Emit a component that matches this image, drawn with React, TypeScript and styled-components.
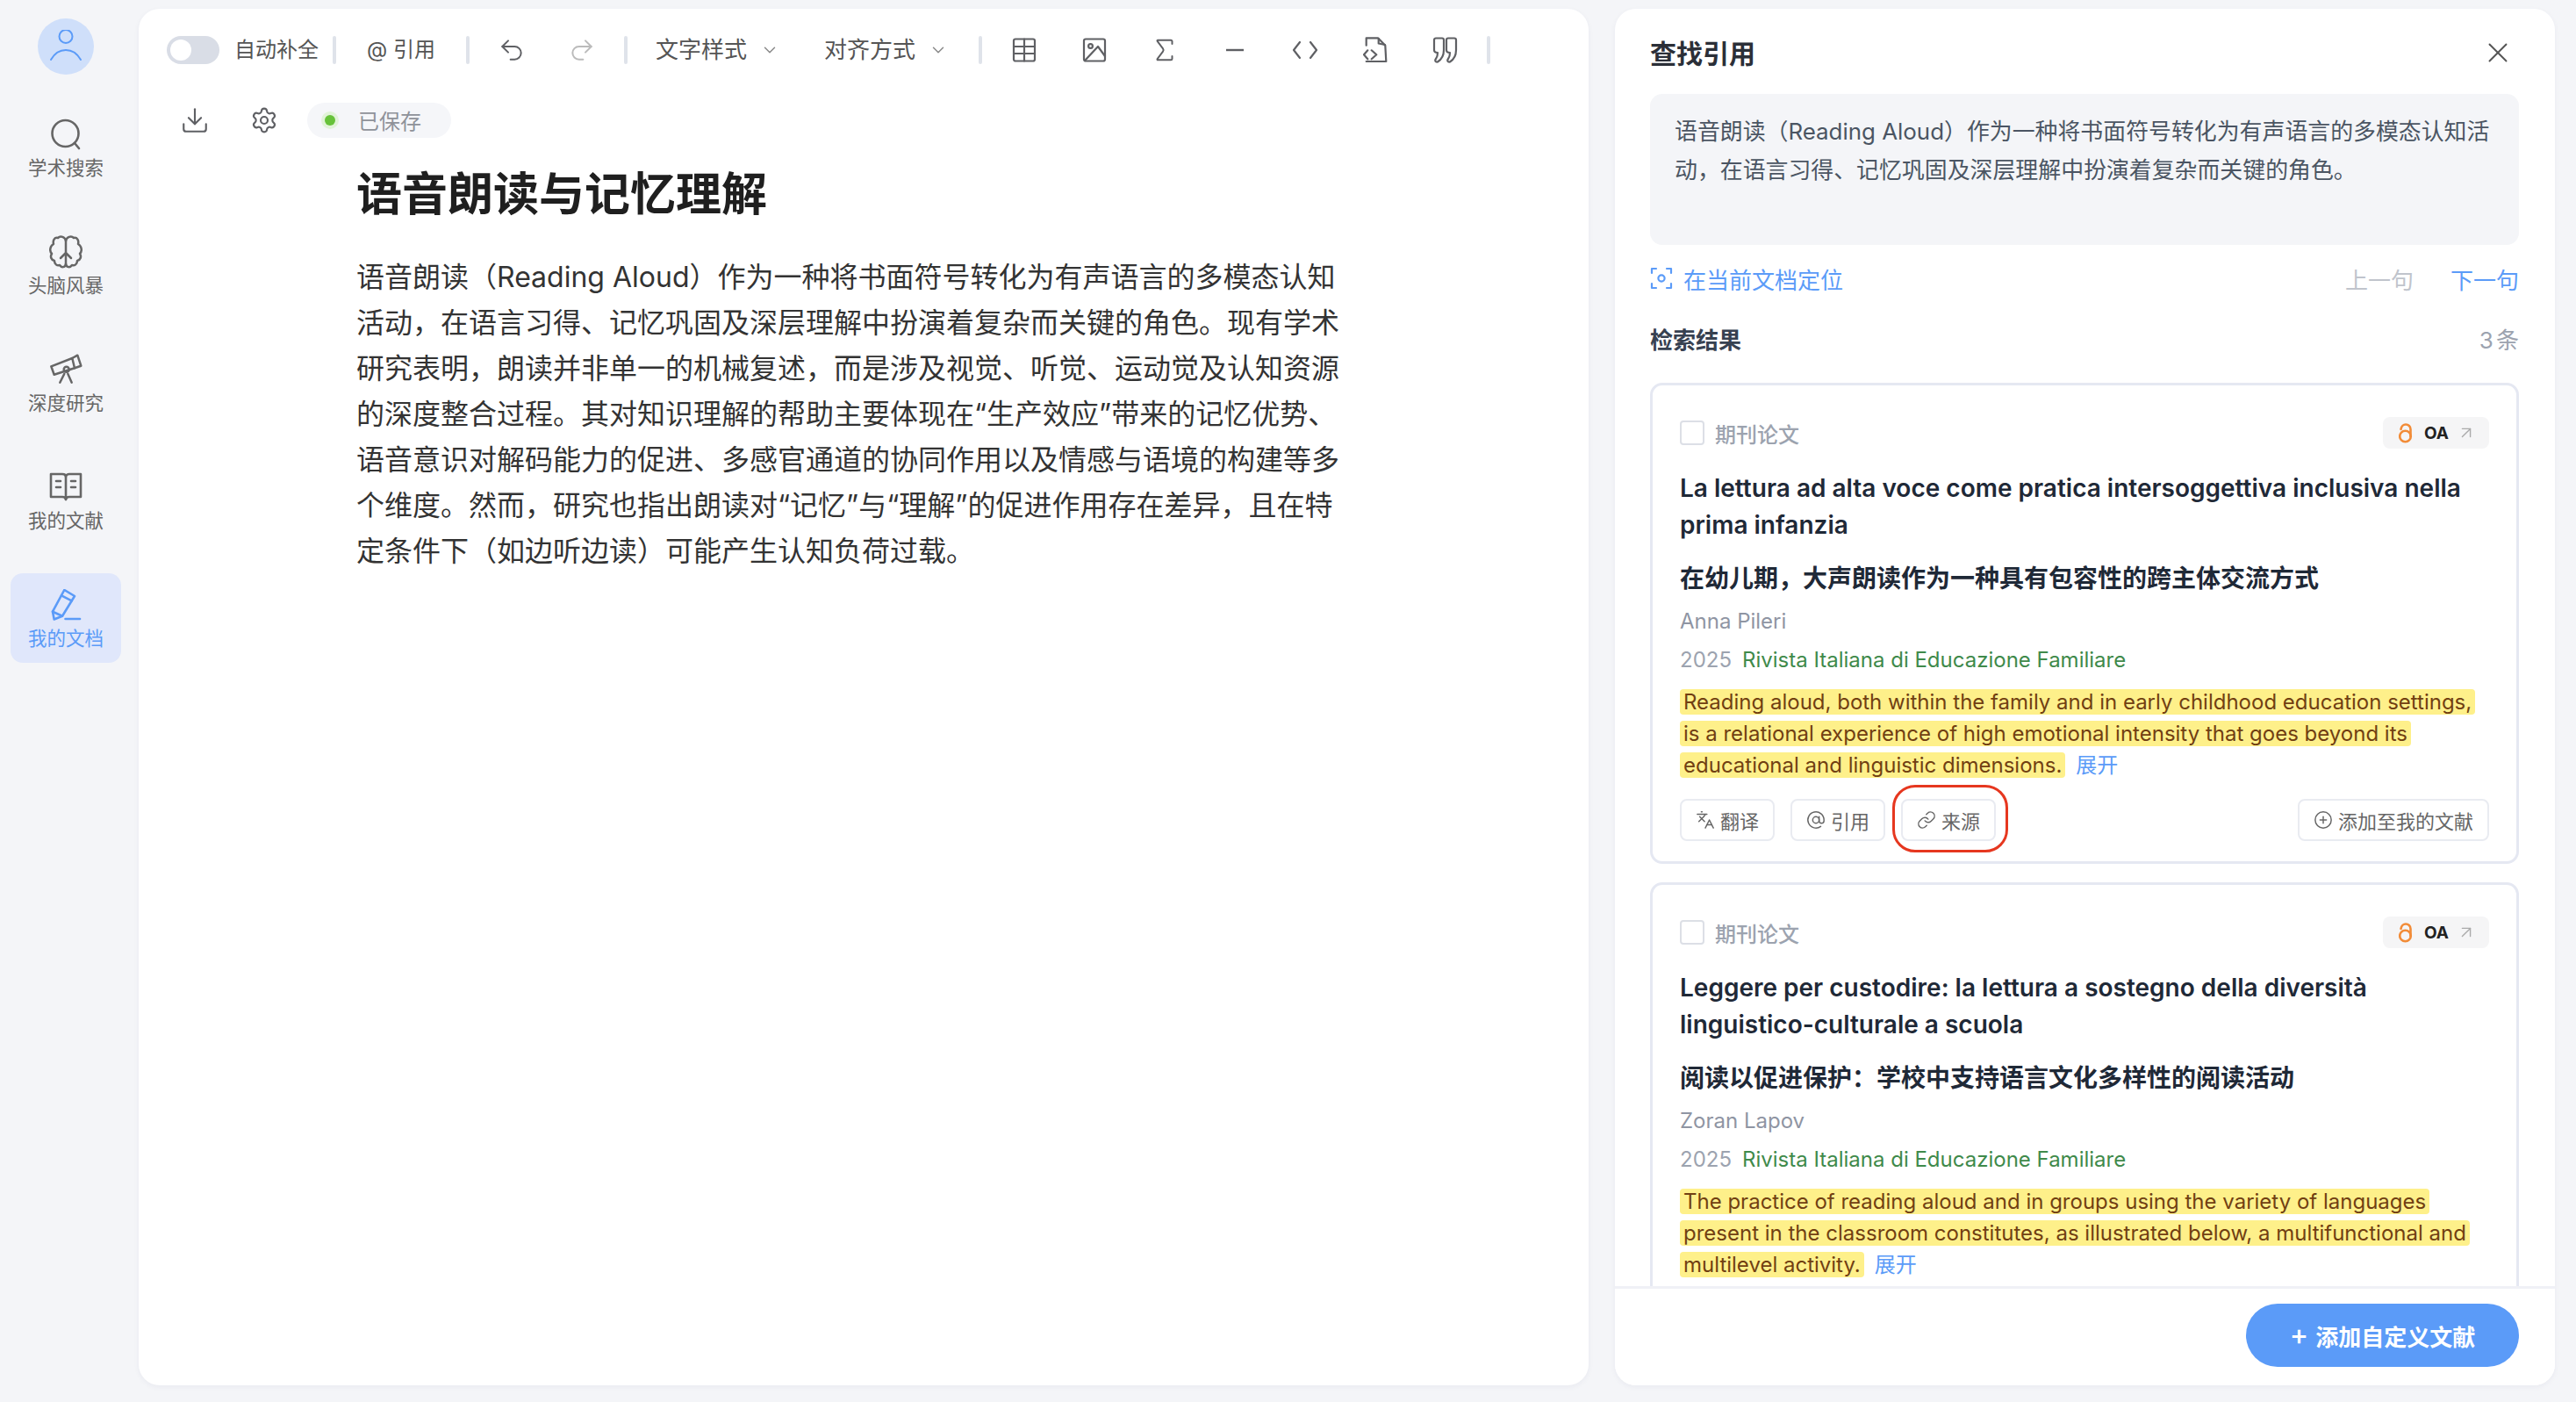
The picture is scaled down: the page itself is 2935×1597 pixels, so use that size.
import React from "react";
import styled, { createGlobalStyle } from "styled-components";
import { ChevronDown, Undo2, Redo2, Sigma, Download, Settings, Languages, Link, CirclePlus, AtSign, ArrowUpRight, X } from "lucide-react";

const Global = createGlobalStyle`
  html, body { margin: 0; padding: 0; height: 100%; }
  #root { height: 100vh; }
  * { box-sizing: border-box; }
  body { font-family: Inter, "Noto Sans CJK SC", sans-serif; background: #f4f5f8; color: #333; }
`;

const Page = styled.div`
  display: flex;
  height: 1597px;
  padding: 10px 24px 19px 0;
  background: #f4f5f8;
`;

/* Sidebar */
const Sidebar = styled.nav`
  width: 158px;
  margin-top: -10px;
  flex: none;
  display: flex;
  flex-direction: column;
  align-items: center;
  padding-top: 21px;
  gap: 32px;
`;
const Avatar = styled.div`
  width: 64px;
  height: 64px;
  margin-right: 8px;
  border-radius: 50%;
  background: #cfdffa;
  display: flex;
  align-items: center;
  justify-content: center;
  color: #5b9bf8;
`;
const NavItem = styled.div<{ $active?: boolean }>`
  width: 126px;
  height: 102px;
  margin-right: 8px;
  border-radius: 14px;
  padding-top: 18px;
  display: flex;
  flex-direction: column;
  align-items: center;
  background: ${(p) => (p.$active ? "#e0e7fb" : "transparent")};
  color: ${(p) => (p.$active ? "#5b9bf8" : "#666")};
`;
const NavIcon = styled.div`
  height: 36px;
  margin-bottom: 5px;
  display: flex;
  align-items: center;
  justify-content: center;
`;
const NavLabel = styled.div`
  font-size: 21.5px;
  line-height: 30px;
`;

/* Editor panel */
const Editor = styled.main`
  width: 1652px;
  flex: none;
  background: #fff;
  border-radius: 24px;
  box-shadow: 0 2px 6px rgba(30, 40, 90, 0.05);
  padding: 31px 0 0 32px;
`;
const Toolbar = styled.div`
  display: flex;
  align-items: center;
  height: 32px;
  color: #555;
`;
const Toggle = styled.div`
  width: 60px;
  height: 32px;
  border-radius: 16px;
  background: #d9dde6;
  padding: 4px;
  margin-right: 17px;
`;
const Knob = styled.div`
  width: 24px;
  height: 24px;
  border-radius: 50%;
  background: #fff;
`;
const ToolText = styled.span<{ $size?: number }>`
  font-size: ${(p) => p.$size ?? 24}px;
  line-height: 32px;
  color: #555;
  white-space: nowrap;
`;
const Sep = styled.div<{ $left: number }>`
  width: 4px;
  height: 32px;
  margin-left: ${(p) => p.$left}px;
  background: #dfe3ea;
  border-radius: 2px;
  flex: none;
`;
const RefButton = styled.div`
  margin-left: 35px;
  width: 113px;
  font-size: 24px;
  line-height: 32px;
  color: #555;
  white-space: nowrap;
`;
const ToolIcon = styled.div<{ $muted?: boolean; $left?: number }>`
  width: 80px;
  height: 32px;
  flex: none;
  margin-left: ${(p) => p.$left ?? 0}px;
  display: flex;
  align-items: center;
  justify-content: center;
  color: ${(p) => (p.$muted ? "#bbb" : "#5f6064")};
`;
const Dropdown = styled.div<{ $left: number }>`
  margin-left: ${(p) => p.$left}px;
  display: flex;
  align-items: center;
  gap: 15px;
  color: #888;
`;
const SecondBar = styled.div`
  display: flex;
  align-items: center;
  height: 40px;
  margin: 44px 0 0 12px;
  color: #5f6064;
`;
const SmallIcon = styled.div`
  width: 40px;
  height: 40px;
  display: flex;
  align-items: center;
  justify-content: center;
  margin-right: 39px;
  flex: none;
`;
const SavedPill = styled.div`
  height: 40px;
  width: 164px;
  margin-left: -10px;
  border-radius: 20px;
  background: #f5f6f9;
  display: flex;
  align-items: center;
  padding: 0 0 2px 20px;
  gap: 26px;
  font-size: 24px;
  color: #8f9299;
`;
const Dot = styled.span`
  width: 12px;
  height: 12px;
  margin-top: 2px;
  border-radius: 50%;
  background: #67c23a;
  box-shadow: 0 0 0 4px #e1f3d8;
  flex: none;
`;
const Doc = styled.article`
  padding-left: 216px;
  width: 1346px;
`;
const DocTitle = styled.h1`
  margin: 33px 0 0;
  font-size: 52px;
  line-height: 64px;
  font-weight: 700;
  color: #1f1f1f;
`;
const DocBody = styled.p`
  margin: 36px 0 0;
  font-size: 32px;
  line-height: 52px;
  color: #333;
`;

/* Right panel */
const Panel = styled.aside`
  flex: none;
  margin-left: 30px;
  width: 1071px;
  background: #fff;
  border-radius: 24px;
  box-shadow: 0 2px 6px rgba(30, 40, 90, 0.05);
  display: flex;
  flex-direction: column;
  padding-top: 30px;
  overflow: hidden;
`;
const PanelHead = styled.div`
  display: flex;
  align-items: center;
  justify-content: space-between;
  height: 40px;
  padding: 0 46px 0 40px;
  color: #555;
`;
const PanelTitle = styled.h2`
  margin: -3px 0 0;
  font-size: 30px;
  font-weight: 600;
  color: #2b2f38;
`;
const QuoteBox = styled.div`
  margin: 27px 41px 0 40px;
  height: 172px;
  background: #f4f5f8;
  border-radius: 14px;
  padding: 21px 28px;
  font-size: 25.9px;
  line-height: 44px;
  color: #4b5563;
`;
const LocateRow = styled.div`
  margin: 18px 41px 0 40px;
  height: 40px;
  display: flex;
  align-items: center;
  font-size: 26px;
  color: #5b9bf8;
`;
const Locate = styled.div`
  display: flex;
  align-items: center;
  gap: 12px;
  flex: 1;
`;
const PrevNext = styled.span<{ $off?: boolean }>`
  margin-left: 42px;
  color: ${(p) => (p.$off ? "#c0c4cc" : "#5b9bf8")};
`;
const ResultHead = styled.div`
  margin: 28px 41px 0 40px;
  height: 40px;
  display: flex;
  align-items: center;
  justify-content: space-between;
  font-size: 26px;
`;
const ResultTitle = styled.span`
  font-weight: 600;
  color: #374151;
`;
const ResultCount = styled.span`
  color: #9ca3af;
  word-spacing: -4px;
`;
const List = styled.div`
  flex: 1;
  margin-top: 31px;
  padding: 0 41px 0 40px;
  overflow: hidden;
  min-height: 0;
`;
const Card = styled.section`
  border: 3px solid #e5e8f2;
  border-radius: 14px;
  padding: 36px 31px 23px;
  margin-bottom: 21px;
`;
const CardTop = styled.div`
  display: flex;
  align-items: center;
  justify-content: space-between;
  height: 36px;
`;
const TypeLabel = styled.label`
  display: flex;
  align-items: center;
  gap: 12px;
  font-size: 24px;
  font-weight: 500;
  color: #9ca3af;
`;
const Check = styled.span`
  width: 28px;
  height: 28px;
  border: 2.5px solid #dcdfe6;
  border-radius: 4px;
  background: #fff;
`;
const OaTag = styled.div`
  width: 121px;
  height: 36px;
  border-radius: 8px;
  background: #f5f5f6;
  display: flex;
  align-items: center;
  padding-left: 18px;
  font-size: 19px;
  font-weight: 700;
  color: #222;
`;
const OaText = styled.span`
  margin: 0 9px 0 13px;
`;
const Title = styled.h3`
  margin: 24px 0 0;
  font-size: 28px;
  line-height: 42px;
  font-weight: 600;
  color: #1f2937;
`;
const SubTitle = styled.h4`
  margin: 19px 0 0;
  font-size: 28px;
  line-height: 42px;
  font-weight: 600;
  color: #1f2937;
`;
const Author = styled.div`
  margin-top: 10px;
  font-size: 24px;
  line-height: 36px;
  color: #8f95a3;
`;
const Meta = styled.div`
  margin-top: 8px;
  font-size: 24px;
  line-height: 36px;
  color: #9ca3af;
  display: flex;
  gap: 12px;
`;
const Journal = styled.span`
  color: #3f8a4b;
`;
const Abstract = styled.p`
  margin: 12px 0 0;
  font-size: 24px;
  line-height: 36px;
`;
const Mark = styled.span`
  background: #fef08a;
  color: #713f12;
  padding: 0 4px;
  border-radius: 4px;
  box-decoration-break: clone;
  -webkit-box-decoration-break: clone;
`;
const Expand = styled.span`
  margin-left: 12px;
  color: #5b9bf8;
`;
const Actions = styled.div`
  margin-top: 20px;
  display: flex;
  align-items: center;
  gap: 18px;
`;
const ActionBtn = styled.div`
  position: relative;
  height: 48px;
  width: 108px;
  border: 2.5px solid #e9ebf1;
  border-radius: 8px;
  display: flex;
  align-items: center;
  justify-content: center;
  gap: 6px;
  font-size: 22px;
  color: #666;
  background: #fff;
`;
const AddBtn = styled(ActionBtn)`
  width: 218px;
  margin-left: auto;
`;
const Annotation = styled.span`
  position: absolute;
  left: -12px;
  right: -16px;
  top: -18px;
  bottom: -15px;
  border: 3px solid #e6371f;
  border-radius: 26px;
  pointer-events: none;
`;
const Footer = styled.footer`
  flex: none;
  border-top: 3px solid #f0f1f6;
  height: 113px;
  padding: 17px 41px 0 0;
  display: flex;
  justify-content: flex-end;
  background: #fff;
`;
const AddCustom = styled.button`
  width: 311px;
  height: 72px;
  border: none;
  border-radius: 36px;
  background: #5b9bf8;
  color: #fff;
  font-family: inherit;
  font-size: 26px;
  font-weight: 600;
  display: flex;
  align-items: center;
  justify-content: center;
  gap: 8px;
`;
const PlusSign = styled.span`
  font-size: 32px;
  font-weight: 500;
  line-height: 1;
`;

/* Icons */
const s = { fill: "none", stroke: "currentColor", strokeLinecap: "round", strokeLinejoin: "round" } as const;
const UserIcon = () => (
  <svg width="38" height="38" viewBox="0 0 38 38" {...s} strokeWidth="2">
    <circle cx="19" cy="7.5" r="7.5" />
    <path d="M2 34c4-7 10-11 17-11s13 4 17 11" />
  </svg>
);
const SearchIcon = () => (
  <svg width="36" height="36" viewBox="0 0 36 36" {...s} strokeWidth="2.6">
    <circle cx="17.5" cy="17" r="15" />
    <path d="M28 28l5 6" />
  </svg>
);
const BrainIcon = () => (
  <svg width="38" height="38" viewBox="0 0 38 38" {...s} strokeWidth="2.5">
    <path d="M19 6C18 2 13 0 10 3 6 2 4 6 5 10 1 12 0 18 3 21c-2 3-1 7 3 8 0 4 3 6 6 5 2 3 6 3 7-1" />
    <path d="M19 6c1-4 6-6 9-3 4-1 6 3 5 7 4 2 5 8 2 11 2 3 1 7-3 8 0 4-3 6-6 5-2 3-6 3-7-1" />
    <path d="M19 6v27M19 20l-6 6M19 20l6 6" />
  </svg>
);
const TelescopeIcon = () => (
  <svg width="38" height="36" viewBox="-1 -1 38 36" {...s} strokeWidth="2.5">
    <path d="M1.3 13.3L25.3 4l2.7 11.3-23.3 7.4z" />
    <path d="M25.3 4l6-3.3 4 12-7.3 2.6" />
    <circle cx="18.7" cy="16.7" r="3" />
    <path d="M16.3 21.700l-5 10M20.300 21.700l4.400 10" />
  </svg>
);
const BookIcon = () => (
  <svg width="38" height="36" viewBox="0 0 38 36" {...s} strokeWidth="2.6">
    <path d="M2 3h13c2 0 4 1 4 3 0-2 2-3 4-3h13v26H23c-2 0-4 1-4 3 0-2-2-3-4-3H2z" />
    <path d="M19 6v26M8 11h5M8 18h5M25 11h5M25 18h5" />
  </svg>
);
const PenIcon = () => (
  <svg width="36" height="36" viewBox="0 0 36 36" {...s} strokeWidth="2.6">
    <path d="M16.3 1L28 8 14 30.700 4.700 34.500 3 25.700z" />
    <path d="M13 7.300l11.700 6M3 25.700l11 5" />
    <path d="M17.500 34H34" />
  </svg>
);
const TableIcon = () => (
  <svg width="28" height="28" viewBox="0 0 28 28" {...s} strokeWidth="2.2">
    <rect x="2" y="1.5" width="24" height="25" rx="2" />
    <path d="M14 1.500v25M2 10h24M2 18h24" />
  </svg>
);
const ImageIcon = () => (
  <svg width="28" height="28" viewBox="0 0 28 28" {...s} strokeWidth="2.2">
    <rect x="2" y="1.5" width="24" height="25" rx="2" />
    <circle cx="9.5" cy="9.5" r="2.4" />
    <path d="M3 26l15-16 8 11" />
  </svg>
);
const CodeIcon = () => (
  <svg width="30" height="28" viewBox="0 0 30 28" {...s} strokeWidth="2.2">
    <path d="M9 5l-7 9 7 9M21 5l7 9-7 9" />
  </svg>
);
const FileCodeIcon = () => (
  <svg width="28" height="30" viewBox="-1 0 28 30" {...s} strokeWidth="2.2">
    <path d="M2.700 9.700V1.300H16l8.300 8.400L25.300 28H2.700" />
    <path d="M16.700 2v5.500L24 9" />
    <path d="M4.300 15.300L0 20.300l4.300 5M8.700 15.300l5.600 5-5.600 5" />
  </svg>
);
const QuoteIcon = () => (
  <svg width="30" height="30" viewBox="0 0 30 30" {...s} strokeWidth="2.2">
    <path d="M4 1.500h7a2 2 0 0 1 2 2V15c0 6-3 11-7 13.500-2.500.5-3.500-1.500-2-3.500 1.500-2 2-3.500 2-7-3 0-4-1-4-3V3.500a2 2 0 0 1 2-2z" />
    <path d="M18 1.500h7a2 2 0 0 1 2 2V15c0 6-3 11-7 13.500-2.500.5-3.500-1.500-2-3.500 1.500-2 2-3.500 2-7-3 0-4-1-4-3V3.500a2 2 0 0 1 2-2z" />
  </svg>
);
const ScanIcon = () => (
  <svg width="26" height="26" viewBox="0 0 26 26" {...s} strokeWidth="2.2">
    <path d="M2 7V2h5M19 2h5v5M24 19v5h-5M7 24H2v-5" />
    <circle cx="13" cy="13" r="3.6" />
  </svg>
);
const OaIcon = () => (
  <svg width="16" height="23" viewBox="0 0 16 23" {...s} stroke="#f28c38" strokeWidth="2.6">
    <circle cx="7.5" cy="15" r="6.3" />
    <path d="M2.500 7C3 3.500 5.500 1.500 8 1.500c3 0 5.500 2 5.500 5.500v8" />
  </svg>
);

const Abstract1 = "Reading aloud, both within the family and in early childhood education settings, is a relational experience of high emotional intensity that goes beyond its educational and linguistic dimensions.";
const Abstract2 = "The practice of reading aloud and in groups using the variety of languages present in the classroom constitutes, as illustrated below, a multifunctional and multilevel activity.";

function PaperCard(props: { title: string; sub: string; author: string; text: string; actions?: boolean }) {
  return (
    <Card>
      <CardTop>
        <TypeLabel>
          <Check />
          期刊论文
        </TypeLabel>
        <OaTag>
          <OaIcon />
          <OaText>OA</OaText>
          <ArrowUpRight size={22} color="#aaa" strokeWidth={1.5} />
        </OaTag>
      </CardTop>
      <Title>{props.title}</Title>
      <SubTitle>{props.sub}</SubTitle>
      <Author>{props.author}</Author>
      <Meta>
        <span>2025</span>
        <Journal>Rivista Italiana di Educazione Familiare</Journal>
      </Meta>
      <Abstract>
        <Mark>{props.text}</Mark>
        <Expand>展开</Expand>
      </Abstract>
      {props.actions !== false && (
        <Actions>
          <ActionBtn>
            <Languages size={22} strokeWidth={1.6} />
            翻译
          </ActionBtn>
          <ActionBtn>
            <AtSign size={22} strokeWidth={1.6} />
            引用
          </ActionBtn>
          <ActionBtn>
            <Link size={22} strokeWidth={1.6} />
            来源
            <Annotation />
          </ActionBtn>
          <AddBtn>
            <CirclePlus size={22} strokeWidth={1.6} />
            添加至我的文献
          </AddBtn>
        </Actions>
      )}
    </Card>
  );
}

export default function App() {
  return (
    <>
      <Global />
      <Page>
        <Sidebar>
          <Avatar>
            <UserIcon />
          </Avatar>
          <NavItem>
            <NavIcon><SearchIcon /></NavIcon>
            <NavLabel>学术搜索</NavLabel>
          </NavItem>
          <NavItem>
            <NavIcon><BrainIcon /></NavIcon>
            <NavLabel>头脑风暴</NavLabel>
          </NavItem>
          <NavItem>
            <NavIcon><TelescopeIcon /></NavIcon>
            <NavLabel>深度研究</NavLabel>
          </NavItem>
          <NavItem>
            <NavIcon><BookIcon /></NavIcon>
            <NavLabel>我的文献</NavLabel>
          </NavItem>
          <NavItem $active>
            <NavIcon><PenIcon /></NavIcon>
            <NavLabel>我的文档</NavLabel>
          </NavItem>
        </Sidebar>
        <Editor>
          <Toolbar>
            <Toggle><Knob /></Toggle>
            <ToolText>自动补全</ToolText>
            <Sep $left={16} />
            <RefButton>@ 引用</RefButton>
            <Sep $left={0} />
            <ToolIcon $left={8}><Undo2 size={32} strokeWidth={1.5} /></ToolIcon>
            <ToolIcon $muted><Redo2 size={32} strokeWidth={1.5} /></ToolIcon>
            <Sep $left={8} />
            <Dropdown $left={32}>
              <ToolText $size={26}>文字样式</ToolText>
              <ChevronDown size={22} strokeWidth={1.6} />
            </Dropdown>
            <Dropdown $left={51}>
              <ToolText $size={26}>对齐方式</ToolText>
              <ChevronDown size={22} strokeWidth={1.6} />
            </Dropdown>
            <Sep $left={35} />
            <ToolIcon $left={8}><TableIcon /></ToolIcon>
            <ToolIcon><ImageIcon /></ToolIcon>
            <ToolIcon><Sigma size={34} strokeWidth={1.4} /></ToolIcon>
            <ToolIcon><svg width="24" height="6" viewBox="0 0 24 6" fill="none" stroke="currentColor" strokeWidth="2.4"><path d="M2 3h20" /></svg></ToolIcon>
            <ToolIcon><CodeIcon /></ToolIcon>
            <ToolIcon><FileCodeIcon /></ToolIcon>
            <ToolIcon><QuoteIcon /></ToolIcon>
            <Sep $left={7} />
          </Toolbar>
          <SecondBar>
            <SmallIcon><Download size={34} strokeWidth={1.5} /></SmallIcon>
            <SmallIcon><Settings size={32} strokeWidth={1.6} /></SmallIcon>
            <SavedPill>
              <Dot />
              已保存
            </SavedPill>
          </SecondBar>
          <Doc>
            <DocTitle>语音朗读与记忆理解</DocTitle>
            <DocBody>
              语音朗读（Reading Aloud）作为一种将书面符号转化为有声语言的多模态认知活动，在语言习得、记忆巩固及深层理解中扮演着复杂而关键的角色。现有学术研究表明，朗读并非单一的机械复述，而是涉及视觉、听觉、运动觉及认知资源的深度整合过程。其对知识理解的帮助主要体现在“生产效应”带来的记忆优势、语音意识对解码能力的促进、多感官通道的协同作用以及情感与语境的构建等多个维度。然而，研究也指出朗读对“记忆”与“理解”的促进作用存在差异，且在特定条件下（如边听边读）可能产生认知负荷过载。
            </DocBody>
          </Doc>
        </Editor>
        <Panel>
          <PanelHead>
            <PanelTitle>查找引用</PanelTitle>
            <X size={38} strokeWidth={1.2} />
          </PanelHead>
          <QuoteBox>
            语音朗读（Reading Aloud）作为一种将书面符号转化为有声语言的多模态认知活动，在语言习得、记忆巩固及深层理解中扮演着复杂而关键的角色。
          </QuoteBox>
          <LocateRow>
            <Locate>
              <ScanIcon />
              在当前文档定位
            </Locate>
            <PrevNext $off>上一句</PrevNext>
            <PrevNext>下一句</PrevNext>
          </LocateRow>
          <ResultHead>
            <ResultTitle>检索结果</ResultTitle>
            <ResultCount>3 条</ResultCount>
          </ResultHead>
          <List>
            <PaperCard
              title="La lettura ad alta voce come pratica intersoggettiva inclusiva nella prima infanzia"
              sub="在幼儿期，大声朗读作为一种具有包容性的跨主体交流方式"
              author="Anna Pileri"
              text={Abstract1}
            />
            <PaperCard
              title="Leggere per custodire: la lettura a sostegno della diversità linguistico-culturale a scuola"
              sub="阅读以促进保护：学校中支持语言文化多样性的阅读活动"
              author="Zoran Lapov"
              text={Abstract2}
              actions={false}
            />
          </List>
          <Footer>
            <AddCustom><PlusSign>+</PlusSign>添加自定义文献</AddCustom>
          </Footer>
        </Panel>
      </Page>
    </>
  );
}
